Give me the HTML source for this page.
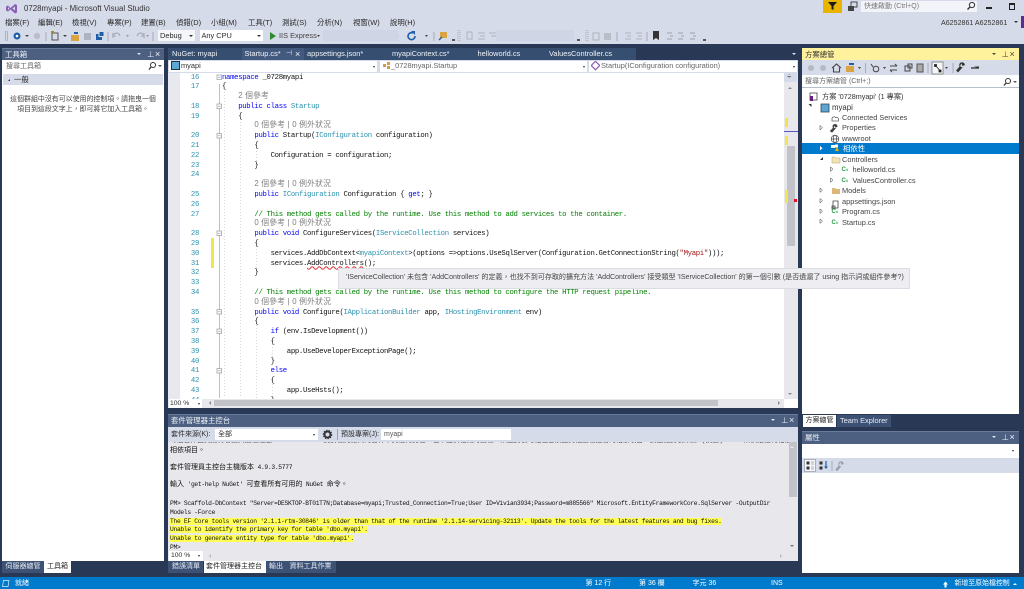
<!DOCTYPE html>
<html><head><meta charset="utf-8"><style>
html,body{margin:0;padding:0;width:1024px;height:589px;overflow:hidden;background:#293955}
body{position:relative;font-family:"Liberation Sans","Noto Sans CJK TC",sans-serif;font-size:7.4px;color:#2a2a2a}
#w{position:absolute;left:0;top:0;width:1024px;height:589px;overflow:hidden;filter:blur(.3px)}
.a{position:absolute}
.t{position:absolute;white-space:nowrap;line-height:10px}
pre{margin:0;position:absolute;font-family:"Liberation Mono","Noto Sans CJK TC",monospace}
.code{left:222px;top:73.5px;font-size:7.3px;letter-spacing:-.33px;line-height:9.79px;color:#111}
.nums{left:180px;width:19px;top:73.5px;font-size:7.3px;letter-spacing:-.33px;line-height:9.79px;color:#2b91af;text-align:right}
.k{color:#0000ff}.ty{color:#2b91af}.c{color:#008000}.h{color:#808080;font-family:"Liberation Sans","Noto Sans CJK TC",sans-serif;font-size:7.8px;letter-spacing:.2px;line-height:0}.s{color:#a31515}
.con{left:170px;font-size:6.3px;letter-spacing:-.31px;line-height:8.8px;color:#111;top:0}
.cj{font-size:7px;letter-spacing:0;line-height:0}
.y{background:#ffff54}
.w{color:#fff}.lt{color:#e8ecf4}
.tw{color:#f0f3f8}
.tb{font-size:7px}
</style></head><body><div id="w">
<div class="a" style="left:0;top:0;width:1024px;height:44px;background:#d6dbe9"></div>
<div class="a" style="left:0;top:44px;width:1024px;height:533px;background:#293955"></div>
<div class="a" style="left:0;top:577px;width:1024px;height:12px;background:#007acc"></div>

<!-- title -->
<svg class="a" style="left:5px;top:2px" width="13" height="13" viewBox="0 0 13 13"><path d="M1 4.5 3 3.5 5.5 6 10 2 12 3V10.5L10 11.5 5.5 7.5 3 9.5 1 8.5ZM3 5V8L4.4 6.5ZM10 4.5 7.5 6.5 10 8.5Z" fill="#8c5fb8"/></svg>
<div class="t" style="left:24px;top:4px;font-size:7.9px;color:#333">0728myapi - Microsoft Visual Studio</div>
<div class="a" style="left:823px;top:0;width:19px;height:13px;background:#e8b400"></div>
<svg class="a" style="left:827px;top:1px" width="11" height="10"><path d="M1 1H10L6.5 5V9L4.5 8V5Z" fill="#1a1a1a"/></svg>
<svg class="a" style="left:847px;top:1px" width="11" height="11"><rect x="4" y="1" width="6" height="5" fill="none" stroke="#444"/><rect x="1" y="5" width="6" height="5" fill="#444"/></svg>
<div class="a" style="left:861px;top:1px;width:116px;height:11px;background:#f2f4f9"></div>
<div class="t" style="left:864px;top:1.5px;color:#777;font-size:7px">快速啟動 (Ctrl+Q)</div>
<svg class="a" style="left:966px;top:1px" width="10" height="10"><circle cx="6" cy="4" r="2.6" fill="none" stroke="#333"/><path d="M4 6 1.5 8.5" stroke="#333" stroke-width="1.4"/></svg>
<div class="a" style="left:986px;top:7px;width:6px;height:2px;background:#222"></div>
<div class="a" style="left:1009px;top:3px;width:4px;height:4px;border:1px solid #222;border-top-width:2px"></div>
<div class="t" style="left:941px;top:17.5px;font-size:7.1px;color:#333">A6252861 A6252861</div>
<div class="a" style="left:1014px;top:21px;border:2px solid transparent;border-top:2px solid #333"></div>
<div class="a" style="left:1021px;top:16px;width:3px;height:12px;background:#5c2d91"></div>

<!-- menu -->
<div class="t" style="left:5px;top:17.5px">檔案(F)</div>
<div class="t" style="left:38px;top:17.5px">編輯(E)</div>
<div class="t" style="left:72px;top:17.5px">檢視(V)</div>
<div class="t" style="left:107px;top:17.5px">專案(P)</div>
<div class="t" style="left:141px;top:17.5px">建置(B)</div>
<div class="t" style="left:176px;top:17.5px">偵錯(D)</div>
<div class="t" style="left:211px;top:17.5px">小組(M)</div>
<div class="t" style="left:248px;top:17.5px">工具(T)</div>
<div class="t" style="left:282px;top:17.5px">測試(S)</div>
<div class="t" style="left:317px;top:17.5px">分析(N)</div>
<div class="t" style="left:353px;top:17.5px">視窗(W)</div>
<div class="t" style="left:390px;top:17.5px">說明(H)</div>

<!-- toolbar -->
<svg class="a" style="left:0;top:28px" width="1024" height="16" viewBox="0 0 1024 16">
<g fill="#888"><path d="M5 3h1v10H5zM7 3h1v10H7z" opacity=".5"/></g>
<circle cx="17" cy="8" r="3.5" fill="#1e5fa8"/><circle cx="17" cy="8" r="1.3" fill="#fff"/>
<path d="M25 7h4l-2 2z" fill="#444"/>
<circle cx="37" cy="8" r="3.2" fill="#b9bec9"/>
<path d="M46 4v9" stroke="#aab" />
<rect x="52" y="5" width="6" height="7" fill="none" stroke="#555"/><path d="M51 3h3v2h-3z" fill="#b8860b"/>
<path d="M63 7h4l-2 2z" fill="#444"/>
<path d="M71 7h8v6h-8z" fill="#d9a441"/><path d="M74 4h4v2h-4z" fill="#1e5fa8"/>
<rect x="84" y="5" width="7" height="7" fill="#aeb3c0"/>
<rect x="96" y="6" width="6" height="6" fill="#1e5fa8"/><rect x="99" y="3.500" width="5" height="5" fill="#1e5fa8" stroke="#d6dbe9"/>
<path d="M108 4v9" stroke="#aab"/>
<path d="M113 10c-1-4 3-6 6-4l1 2M113 5v3h3" fill="none" stroke="#a7acb9" stroke-width="1.2"/>
<path d="M126 7h3l-1.500 2z" fill="#999"/>
<path d="M144 10c1-4-3-6-6-4l-1 2M144 5v3h-3" fill="none" stroke="#a7acb9" stroke-width="1.2"/>
<path d="M146 7h3l-1.500 2z" fill="#999"/>
<path d="M153 4v9" stroke="#aab"/>
<path d="M270 4l0 8 6-4z" fill="#2e8b2e"/>
<path d="M317 7h3l-1.500 2z" fill="#444"/>
<path d="M396 7h3l-1.500 2z" fill="#aaa"/>
<path d="M413 5a3.500 3.500 0 1 0 2 3" fill="none" stroke="#1e5fa8" stroke-width="1.6"/><path d="M411 3h4v4z" fill="#1e5fa8"/>
<path d="M425 7h3l-1.500 2z" fill="#444"/>
<path d="M434 4v9" stroke="#aab"/>
<rect x="440" y="4" width="7" height="6" fill="#d9a441"/><path d="M439 12l3-3" stroke="#1e5fa8" stroke-width="1.3"/>
<path d="M452 11h3v2h-3z" fill="#555"/>
<path d="M458 2v12" stroke="#aab" stroke-dasharray="1 1" />
<path d="M460 2v12" stroke="#aab" stroke-dasharray="1 1" />
<rect x="467" y="4" width="5" height="7" fill="none" stroke="#aeb3c0"/>
<path d="M478 5h7M480 8h5M478 11h7M489 5h7M491 8h5" stroke="#aeb3c0" fill="none"/>
<path d="M577 11h3v2h-3z" fill="#555"/><path d="M586 2v12" stroke="#aab" stroke-dasharray="1 1"/><path d="M588 2v12" stroke="#aab" stroke-dasharray="1 1"/>
<rect x="593" y="5" width="6" height="7" fill="none" stroke="#aeb3c0"/><rect x="604" y="5" width="7" height="7" fill="#b9bec9"/>
<path d="M617 4v9" stroke="#aab"/>
<path d="M625 5h6M627 8h4M625 11h6M636 5h6M638 8h4M636 11h6" stroke="#aeb3c0"/>
<path d="M647 4v9" stroke="#aab"/>
<path d="M653 3h6v9l-3-2-3 2z" fill="#333"/>
<path d="M667 5h5M670 8h3M667 11h5M678 5h5M681 8h3M678 11h5M690 5h5M693 8h3M690 11h5" stroke="#9aa0ae"/>
<path d="M703 11h3v2h-3z" fill="#555"/>
</svg>
<div class="a" style="left:158px;top:30px;width:37px;height:11px;background:#f5f6fa"></div>
<div class="t" style="left:160px;top:30.500px;font-size:7.400px">Debug</div>
<div class="a" style="left:189px;top:35px;border:2px solid transparent;border-top:2px solid #333"></div>
<div class="a" style="left:200px;top:30px;width:63px;height:11px;background:#fff"></div>
<div class="t" style="left:201.500px;top:30.500px;font-size:7.400px">Any CPU</div>
<div class="a" style="left:257px;top:35px;border:2px solid transparent;border-top:2px solid #333"></div>
<div class="t" style="left:279px;top:30.500px;font-size:7.400px;color:#444">IIS Express</div>
<div class="a" style="left:323px;top:30px;width:75px;height:11px;background:#cfd5e4"></div>
<div class="a" style="left:496px;top:30px;width:78px;height:11px;background:#cfd5e4"></div>

<!-- toolbox -->
<div class="a" style="left:2px;top:48px;width:162px;height:513px;background:#fff"></div>
<div class="a" style="left:2px;top:48px;width:162px;height:12px;background:#4d6082;border-top:1px solid #6a7c9c;box-sizing:border-box"></div>
<div class="t tw" style="left:5px;top:49.500px">工具箱</div>
<div class="a" style="left:137px;top:53px;border:2px solid transparent;border-top:2.500px solid #dfe5ef"></div>
<div class="t tw" style="left:147px;top:49.500px;font-size:7.500px">⊥</div>
<div class="t tw" style="left:155px;top:49px;font-size:9px">×</div>
<div class="t" style="left:6px;top:62px;color:#666;font-size:7px">搜尋工具箱</div>
<svg class="a" style="left:147px;top:61px" width="16" height="10"><circle cx="6" cy="4" r="2.500" fill="none" stroke="#333"/><path d="M4 6 2 8.500" stroke="#333" stroke-width="1.300"/><path d="M11 4h4l-2 2z" fill="#555"/></svg>
<div class="a" style="left:3px;top:74px;width:160px;height:11px;background:#d6dbe9"></div>
<div class="a" style="left:8px;top:79px;border:1.500px solid transparent;border-right:1.500px solid #333;border-bottom:1.500px solid #333"></div>
<div class="t" style="left:14px;top:74.500px">一般</div>
<div class="t" style="left:0;top:95px;width:166px;text-align:center;font-size:6.950px;color:#444">這個群組中沒有可以使用的控制項。請拖曳一個</div>
<div class="t" style="left:0;top:105px;width:166px;text-align:center;font-size:6.950px;color:#444">項目到這段文字上，即可將它加入工具箱。</div>
<div class="a" style="left:2px;top:561px;width:43px;height:12px;background:#3c5174"></div>
<div class="t lt tb" style="left:5.500px;top:562px">伺服器總管</div>
<div class="a" style="left:44px;top:561px;width:27px;height:12px;background:#fff"></div>
<div class="t tb" style="left:47px;top:562px;color:#222">工具箱</div>

<!-- editor tabs -->
<div class="a" style="left:168px;top:48px;width:74px;height:12px;background:#364e6f"></div>
<div class="a" style="left:242px;top:47.500px;width:62px;height:12.500px;background:#435a7e"></div>
<div class="a" style="left:304px;top:48px;width:332px;height:12px;background:#364e6f"></div>
<div class="t tw" style="left:172px;top:49px;font-size:7.400px">NuGet: myapi</div>
<div class="t tw" style="left:244.500px;top:49px;font-size:7.400px">Startup.cs*</div>
<div class="t tw" style="left:286px;top:49px;font-size:7px">⊣</div>
<div class="t tw" style="left:295px;top:48.500px;font-size:9px">×</div>
<div class="t tw" style="left:307px;top:49px;font-size:7.400px">appsettings.json*</div>
<div class="t tw" style="left:392px;top:49px;font-size:7.400px">myapiContext.cs*</div>
<div class="t tw" style="left:477.500px;top:49px;font-size:7.400px">helloworld.cs</div>
<div class="t tw" style="left:549px;top:49px;font-size:7.400px">ValuesController.cs</div>
<div class="a" style="left:792px;top:53px;border:2px solid transparent;border-top:2.500px solid #dfe5ef"></div>

<!-- editor -->
<div class="a" style="left:168px;top:60px;width:630px;height:348px;background:#fff"></div>
<div class="a" style="left:168px;top:60px;width:630px;height:12.500px;background:#d6dbe9"></div>
<div class="a" style="left:169px;top:60.500px;width:208px;height:11px;background:#fff"></div>
<div class="a" style="left:380px;top:60.500px;width:207px;height:11px;background:#fff"></div>
<div class="a" style="left:589px;top:60.500px;width:208px;height:11px;background:#fff"></div>
<svg class="a" style="left:171px;top:61px" width="9" height="10"><rect x=".5" y=".5" width="8" height="8" fill="#5aa7d6" stroke="#234"/></svg>
<div class="t" style="left:181px;top:61px;font-size:7.400px;color:#333">myapi</div>
<div class="a" style="left:373px;top:66px;border:1.500px solid transparent;border-top:2px solid #333"></div>
<svg class="a" style="left:382px;top:61px" width="9" height="10"><path d="M1 3h3v3h-3zM5 1h3v3h-3zM5 5h3v3h-3z" fill="#d39b4c"/></svg>
<div class="t" style="left:391px;top:61px;font-size:7.400px;color:#666">_0728myapi.Startup</div>
<div class="a" style="left:583px;top:66px;border:1.500px solid transparent;border-top:2px solid #333"></div>
<svg class="a" style="left:591px;top:61px" width="9" height="10"><rect x="1.500" y="1.500" width="6" height="6" fill="none" stroke="#8a5fb8" stroke-width="1.200" transform="rotate(45 4.500 4.500)"/></svg>
<div class="t" style="left:601px;top:61px;font-size:7.400px;color:#666">Startup(IConfiguration configuration)</div>
<div class="a" style="left:793px;top:66px;border:1.500px solid transparent;border-top:2px solid #333"></div>

<div class="a" style="left:168px;top:72.500px;width:12px;height:326px;background:#e8e9ee"></div>
<div class="a" style="left:168px;top:72.500px;width:630px;height:326px;overflow:hidden">
<pre class="nums" style="left:12px;top:1px">16
17

18
19

20
21
22
23
24

25
26
27

28
29
30
31
32
33
34

35
36
37
38
39
40
41
42
43
44</pre>
</div>
<div class="a" style="left:211px;top:238px;width:2.500px;height:30px;background:#f0e64c"></div>
<div class="a" style="left:218.500px;top:84px;width:.6px;height:314px;background:#c0c0c0"></div>
<svg class="a" style="left:214.500px;top:73px" width="10" height="326" fill="#fff" stroke="#999" stroke-width=".7">
<rect x="2" y="2" width="4.500" height="4.500"/><path d="M3 4.250h2.500"/>
<rect x="2" y="31" width="4.500" height="4.500"/><path d="M3 33.250h2.500"/>
<rect x="2" y="60.500" width="4.500" height="4.500"/><path d="M3 62.750h2.500"/>
<rect x="2" y="158" width="4.500" height="4.500"/><path d="M3 160.250h2.500"/>
<rect x="2" y="236.500" width="4.500" height="4.500"/><path d="M3 238.750h2.500"/>
<rect x="2" y="256" width="4.500" height="4.500"/><path d="M3 258.250h2.500"/>
<rect x="2" y="295.500" width="4.500" height="4.500"/><path d="M3 297.750h2.500"/>
</svg>
<svg class="a" style="left:221px;top:72px" width="60" height="326" stroke="#bcbcbc" stroke-width=".6" stroke-dasharray="1 2" fill="none">
<path d="M3.500 20V326M19.500 50V326M35.500 73V93M35.500 171V201M35.500 250V326M51.500 269V289M51.500 309V326"/>
</svg>
<div class="a" style="left:168px;top:72.500px;width:616px;height:326px;overflow:hidden">
<pre class="code" style="left:54px;top:1px"><span class="k">namespace</span> _0728myapi
{
    <span class="h">2 個參考</span>
    <span class="k">public class</span> <span class="ty">Startup</span>
    {
        <span class="h">0 個參考 | 0 例外狀況</span>
        <span class="k">public</span> Startup(<span class="ty">IConfiguration</span> configuration)
        {
            Configuration = configuration;
        }

        <span class="h">2 個參考 | 0 例外狀況</span>
        <span class="k">public</span> <span class="ty">IConfiguration</span> Configuration { <span class="k">get</span>; }

        <span class="c">// This method gets called by the runtime. Use this method to add services to the container.</span>
        <span class="h">0 個參考 | 0 例外狀況</span>
        <span class="k">public void</span> ConfigureServices(<span class="ty">IServiceCollection</span> services)
        {
            services.AddDbContext&lt;<span class="ty">myapiContext</span>&gt;(options =&gt;options.UseSqlServer(Configuration.GetConnectionString(<span class="s">"Myapi"</span>)));
            services.<span style="text-decoration:underline wavy #e03030 .6px">AddControllers</span>();
        }

        <span class="c">// This method gets called by the runtime. Use this method to configure the HTTP request pipeline.</span>
        <span class="h">0 個參考 | 0 例外狀況</span>
        <span class="k">public void</span> Configure(<span class="ty">IApplicationBuilder</span> app, <span class="ty">IHostingEnvironment</span> env)
        {
            <span class="k">if</span> (env.IsDevelopment())
            {
                app.UseDeveloperExceptionPage();
            }
            <span class="k">else</span>
            {
                app.UseHsts();
            }</pre>
</div>
<!-- scrollbar -->
<div class="a" style="left:784px;top:72.500px;width:14px;height:326px;background:#e8e8ec"></div>
<div class="a" style="left:784px;top:73px;width:13px;height:9px;background:#d6dbe9"></div>
<div class="t" style="left:787px;top:72px;font-size:8px;color:#444">÷</div>
<div class="a" style="left:788px;top:85px;border:2.500px solid transparent;border-bottom:2.500px solid #888"></div>
<div class="a" style="left:787px;top:146px;width:8px;height:100px;background:#c2c3c9"></div>
<div class="a" style="left:785px;top:118px;width:2.500px;height:9px;background:#f0e64c"></div>
<div class="a" style="left:785px;top:136px;width:2.500px;height:9px;background:#f0e64c"></div>
<div class="a" style="left:785px;top:190px;width:2.500px;height:13px;background:#f0e64c"></div>
<div class="a" style="left:784px;top:131px;width:14px;height:1px;background:#5555c8"></div>
<div class="a" style="left:794px;top:199px;width:3px;height:3px;background:#e81123"></div>
<div class="a" style="left:788px;top:393px;border:2.500px solid transparent;border-top:2.500px solid #888"></div>
<!-- editor bottom -->
<div class="a" style="left:168px;top:398.500px;width:616px;height:9.500px;background:#e8e8ec"></div>
<div class="a" style="left:169px;top:399px;width:33px;height:9px;background:#fff"></div>
<div class="t" style="left:170px;top:398.500px;font-size:6.800px">100 %</div>
<div class="a" style="left:198px;top:403px;border:1.500px solid transparent;border-top:2px solid #333"></div>
<div class="a" style="left:207px;top:401px;border:2px solid transparent;border-right:2.500px solid #888"></div>
<div class="a" style="left:214px;top:400px;width:504px;height:6px;background:#c2c3c9"></div>
<div class="a" style="left:778px;top:401px;border:2px solid transparent;border-left:2.500px solid #888"></div>

<!-- console -->
<div class="a" style="left:168px;top:415px;width:630px;height:146px;background:#e8e8ec"></div>
<div class="a" style="left:168px;top:414px;width:630px;height:13px;background:#4d6082;border-top:1px solid #6a7c9c;box-sizing:border-box"></div>
<div class="t tw" style="left:171px;top:415.500px">套件管理器主控台</div>
<div class="a" style="left:771px;top:419px;border:2px solid transparent;border-top:2.500px solid #dfe5ef"></div>
<div class="t tw" style="left:781px;top:415.500px;font-size:7.500px">⊥</div>
<div class="t tw" style="left:789px;top:415px;font-size:9px">×</div>
<div class="a" style="left:168px;top:427px;width:630px;height:14.500px;background:#d6dbe9"></div>
<div class="t" style="left:171px;top:429.500px;font-size:7px">套件來源(K):</div>
<div class="a" style="left:215px;top:429px;width:103px;height:11px;background:#fff"></div>
<div class="t" style="left:218px;top:429.500px;font-size:7px">全部</div>
<div class="a" style="left:313px;top:434px;border:1.500px solid transparent;border-top:2px solid #333"></div>
<svg class="a" style="left:322px;top:429px" width="11" height="11"><circle cx="5.500" cy="5.500" r="3" fill="none" stroke="#333" stroke-width="2"/><circle cx="5.500" cy="5.500" r="4.200" fill="none" stroke="#333" stroke-width="1.200" stroke-dasharray="1.300 1.300"/></svg>
<div class="a" style="left:337px;top:429px;width:.7px;height:11px;background:#9aa4b8"></div>
<div class="t" style="left:341px;top:429.500px;font-size:7px">預設專案(J):</div>
<div class="a" style="left:381px;top:429px;width:130px;height:11px;background:#fff"></div>
<div class="t" style="left:384px;top:429.500px;font-size:7px;color:#555">myapi</div>
<pre class="con" style="top:441.500px;height:4px;overflow:hidden;color:#444;font-size:6.800px;line-height:5px;letter-spacing:0"><span style="position:relative;top:-3px">每個套件由其擁有者授與授權給您。 Microsoft 對於協力廠商的套件不負任何責任，也不提供相關的授權。某些封裝可能包含須由其他授權控管的相依項目。請遵循封裝來源 (摘要) URL 來決定任何相依</span></pre>
<pre class="con" style="top:447px"><span class="cj">相依項目。</span></pre>
<pre class="con" style="top:464px"><span class="cj">套件管理員主控台主機版本</span> 4.9.3.5777</pre>
<pre class="con" style="top:481px"><span class="cj">輸入</span> 'get-help NuGet' <span class="cj">可查看所有可用的</span> NuGet <span class="cj">命令。</span></pre>
<pre class="con" style="top:500px">PM&gt; Scaffold-DbContext "Server=DESKTOP-BT01T7N;Database=myapi;Trusted_Connection=True;User ID=Vivian3934;Password=m885566" Microsoft.EntityFrameworkCore.SqlServer -OutputDir
Models -Force
<span class="y">The EF Core tools version '2.1.1-rtm-30846' is older than that of the runtime '2.1.14-servicing-32113'. Update the tools for the latest features and bug fixes.</span>
<span class="y">Unable to identify the primary key for table 'dbo.myapi'.</span>
<span class="y">Unable to generate entity type for table 'dbo.myapi'.</span>
PM&gt;</pre>
<div class="a" style="left:789px;top:442px;width:8px;height:55px;background:#c2c3c9"></div>
<div class="a" style="left:790px;top:444px;border:2.500px solid transparent;border-bottom:2.500px solid #e8e8ec"></div>
<div class="a" style="left:790px;top:545px;border:2.500px solid transparent;border-top:2.500px solid #777"></div>
<div class="a" style="left:169px;top:551px;width:34px;height:10px;background:#fff"></div>
<div class="t" style="left:171px;top:551px;font-size:6.800px">100 %</div>
<div class="a" style="left:198px;top:555px;border:1.500px solid transparent;border-top:2px solid #333"></div>
<div class="a" style="left:207px;top:554px;border:2px solid transparent;border-right:2.500px solid #bbb"></div>
<div class="a" style="left:780px;top:554px;border:2px solid transparent;border-left:2.500px solid #bbb"></div>
<div class="a" style="left:168px;top:561px;width:35px;height:12px;background:#3c5174"></div>
<div class="t lt tb" style="left:172px;top:562px">錯誤清單</div>
<div class="a" style="left:203.500px;top:561px;width:62px;height:12px;background:#fff"></div>
<div class="t tb" style="left:206px;top:562px;color:#222">套件管理器主控台</div>
<div class="a" style="left:265.500px;top:561px;width:21px;height:12px;background:#3c5174"></div>
<div class="t lt tb" style="left:269px;top:562px">輸出</div>
<div class="a" style="left:286.500px;top:561px;width:49px;height:12px;background:#3c5174"></div>
<div class="t lt tb" style="left:289.500px;top:562px">資料工具作業</div>

<!-- solution explorer -->
<div class="a" style="left:802px;top:48px;width:217px;height:366px;background:#fff"></div>
<div class="a" style="left:802px;top:48px;width:217px;height:12px;background:#fff29d"></div>
<div class="t" style="left:805px;top:49.500px;color:#333">方案總管</div>
<div class="a" style="left:992px;top:53px;border:2px solid transparent;border-top:2.500px solid #444"></div>
<div class="t" style="left:1001.500px;top:49.500px;font-size:7.500px;color:#444">⊥</div>
<div class="t" style="left:1009.500px;top:49px;font-size:9px;color:#444">×</div>
<div class="a" style="left:802px;top:60px;width:217px;height:15px;background:#d6dbe9"></div>
<svg class="a" style="left:802px;top:60px" width="217" height="15" viewBox="802 60 217 15">
<circle cx="811" cy="68" r="3" fill="#b4b9c6"/><circle cx="823" cy="68" r="3" fill="#b4b9c6"/>
<path d="M832 68l4.500-4 4.500 4M833.500 67.500V72h6v-4.500" fill="none" stroke="#444" stroke-width="1.100"/>
<rect x="846" y="66" width="8" height="6" fill="#d9a441"/><path d="M849 63h5v2h-5z" fill="#1e5fa8"/>
<path d="M858 67h3l-1.500 2z" fill="#444"/><path d="M865.500 63v10" stroke="#aab"/>
<circle cx="876" cy="69" r="2.800" fill="none" stroke="#444"/><path d="M871 64l2 3" stroke="#444"/>
<path d="M883 67h3l-1.500 2z" fill="#444"/>
<path d="M890 66h7M897 66l-2-2M890 70h7M890 70l2 2" fill="none" stroke="#444"/>
<rect x="905" y="66" width="5" height="5" fill="none" stroke="#444"/><rect x="908" y="64" width="4" height="4" fill="none" stroke="#444"/>
<rect x="917" y="64" width="6" height="8" fill="#aaa" stroke="#555"/>
<path d="M928 63v10" stroke="#aab"/>
<rect x="932" y="62" width="11" height="12" fill="#f5f6fa" stroke="#555" stroke-width=".6"/><path d="M934.500 64.500h2v2h-2zM939 70h2v2h-2zM936 66l3.500 4" fill="#222" stroke="#222" stroke-width=".8"/>
<path d="M945 67h3l-1.500 2z" fill="#444"/>
<path d="M953 63v10" stroke="#aab"/>
<path d="M958 72l4-4.500a2.500 2.500 0 1 1 2.500-2.500l-2 .5-.5-1.500 1-1a3 3 0 0 0-3 3.500l-3.500 4z" fill="#333" stroke="#333" stroke-width=".6"/>
<path d="M971 68h8" stroke="#333" stroke-width="1.300"/><path d="M974 66.500h5v2" fill="#333"/>
</svg>
<div class="a" style="left:802px;top:75px;width:217px;height:13px;background:#fff;border-bottom:.5px solid #b6bdcc;box-sizing:border-box"></div>
<div class="t" style="left:805px;top:77px;font-size:7px;color:#666">搜尋方案總管 (Ctrl+;)</div>
<svg class="a" style="left:1002px;top:77px" width="16" height="10"><circle cx="6" cy="4" r="2.500" fill="none" stroke="#333"/><path d="M4 6 2 8.500" stroke="#333" stroke-width="1.300"/><path d="M11 4h4l-2 2z" fill="#555"/></svg>
<div class="a" style="left:802px;top:143px;width:217px;height:11px;background:#007acc"></div>
<svg class="a" style="left:802px;top:90px" width="217" height="145" viewBox="802 90 217 145">
<rect x="810" y="93" width="7" height="7" fill="none" stroke="#444" stroke-width=".8"/><path d="M810 96h3v5h-3z" fill="#68217a"/>
<path d="M813 106v-3h-3z" fill="#333" transform="translate(-1.500 1)"/>
<rect x="821" y="104" width="8" height="8" fill="#5aa7d6" stroke="#345" stroke-width=".8"/>
<path d="M832 119a2 2 0 0 1 3.500-1.500 2 2 0 0 1 3 1.500v2h-6.500z" fill="none" stroke="#666" stroke-width=".8"/>
<path d="M832 132l3-3.500a2 2 0 1 1 2 -2l-1.500.5-.5-1 1-1a2.300 2.300 0 0 0-2.500 3l-3 3z" fill="#444" stroke="#444"/>
<circle cx="835" cy="139" r="3.800" fill="none" stroke="#444" stroke-width=".7"/><ellipse cx="835" cy="139" rx="1.700" ry="3.800" fill="none" stroke="#444" stroke-width=".7"/><path d="M831 139h8" stroke="#444" stroke-width=".7"/>
<rect x="831" y="145" width="4" height="3" fill="#fff"/><rect x="835" y="144.500" width="3" height="3" fill="#fff"/><path d="M837 147l2 4h-4z" fill="#f2b100"/>
<path d="M832 157h3l1 1h4v5h-8z" fill="#f3e3b7" stroke="#b9a06b" stroke-width=".5"/>
<path d="M832 188h3l1 1h4v5h-8z" fill="#dcb67a"/>
<path d="M833 207v-6h5v7h-5zM832 206h3v3h-3z" fill="none" stroke="#444" stroke-width=".8"/>
<g fill="#333"><path d="M820 125.500l2.500 2.200-2.500 2.200z" fill="#fff" stroke="#333" stroke-width=".5"/>
<path d="M820 188l2.500 2.200-2.500 2.200z" fill="#fff" stroke="#333" stroke-width=".5"/>
<path d="M820 198.500l2.500 2.200-2.500 2.200z" fill="#fff" stroke="#333" stroke-width=".5"/>
<path d="M820 209l2.500 2.200-2.500 2.200z" fill="#fff" stroke="#333" stroke-width=".5"/>
<path d="M820 219l2.500 2.200-2.500 2.200z" fill="#fff" stroke="#333" stroke-width=".5"/>
<path d="M830.500 167l2.500 2.200-2.500 2.200z" fill="#fff" stroke="#333" stroke-width=".5"/>
<path d="M830.500 178l2.500 2.200-2.500 2.200z" fill="#fff" stroke="#333" stroke-width=".5"/>
<path d="M823 157v3h-3z"/></g>
<path d="M820 146l2.500 2.200-2.500 2.200z" fill="#fff"/>
</svg>
<div class="t" style="left:822px;top:91.500px;font-size:7.200px;color:#333">方案 '0728myapi' (1 專案)</div>
<div class="t" style="left:832px;top:102.500px;font-size:7.800px;color:#333">myapi</div>
<div class="t" style="left:842px;top:112.800px;font-size:7.300px;color:#444">Connected Services</div>
<div class="t" style="left:842px;top:123.300px;font-size:7.400px;color:#444">Properties</div>
<div class="t" style="left:842px;top:133.800px;font-size:7.400px;color:#444">wwwroot</div>
<div class="t" style="left:843px;top:144px;font-size:7.400px;color:#fff">相依性</div>
<div class="t" style="left:842px;top:154.500px;font-size:7.400px;color:#444">Controllers</div>
<div class="t" style="left:852.500px;top:165px;font-size:7.400px;color:#444">helloworld.cs</div>
<div class="t" style="left:852.500px;top:175.500px;font-size:7.400px;color:#444">ValuesController.cs</div>
<div class="t" style="left:842px;top:186px;font-size:7.400px;color:#444">Models</div>
<div class="t" style="left:842px;top:196.500px;font-size:7.400px;color:#444">appsettings.json</div>
<div class="t" style="left:842px;top:207px;font-size:7.400px;color:#444">Program.cs</div>
<div class="t" style="left:842px;top:217.500px;font-size:7.400px;color:#444">Startup.cs</div>
<div class="t" style="left:841.500px;top:165px;font-size:6px;font-weight:bold;color:#2a9d4a">C<span style="font-size:4px">#</span></div>
<div class="t" style="left:841.500px;top:175.500px;font-size:6px;font-weight:bold;color:#2a9d4a">C<span style="font-size:4px">#</span></div>
<div class="t" style="left:831.500px;top:207px;font-size:6px;font-weight:bold;color:#2a9d4a">C<span style="font-size:4px">#</span></div>
<div class="t" style="left:831.500px;top:217.500px;font-size:6px;font-weight:bold;color:#2a9d4a">C<span style="font-size:4px">#</span></div>

<div class="a" style="left:803px;top:415px;width:33px;height:12px;background:#fff"></div>
<div class="t tb" style="left:805.500px;top:416px;color:#222">方案總管</div>
<div class="a" style="left:836.500px;top:415px;width:54px;height:12px;background:#3c5174"></div>
<div class="t lt" style="left:840px;top:416px;font-size:7.400px">Team Explorer</div>

<!-- properties -->
<div class="a" style="left:802px;top:431px;width:217px;height:142px;background:#fff"></div>
<div class="a" style="left:802px;top:431px;width:217px;height:13px;background:#4d6082;border-top:1px solid #6a7c9c;box-sizing:border-box"></div>
<div class="t tw" style="left:805px;top:433px">屬性</div>
<div class="a" style="left:992px;top:436px;border:2px solid transparent;border-top:2.500px solid #dfe5ef"></div>
<div class="t tw" style="left:1001.500px;top:432.500px;font-size:7.500px">⊥</div>
<div class="t tw" style="left:1009.500px;top:432px;font-size:9px">×</div>
<div class="a" style="left:1012px;top:450px;border:1.500px solid transparent;border-top:2px solid #333"></div>
<div class="a" style="left:802px;top:458px;width:217px;height:15px;background:#d6dbe9"></div>
<svg class="a" style="left:802px;top:458px" width="60" height="15" viewBox="802 458 60 15">
<rect x="804.500" y="459.500" width="11" height="12" fill="#f5f6fa" stroke="#889" stroke-width=".6"/>
<path d="M806.500 461.500h3v3h-3zM806.500 466.500h3v3h-3z" fill="#333"/><path d="M811 462h3M811 464h3M811 467h3M811 469h3" stroke="#999" stroke-width=".7"/>
<path d="M819.500 461.500h3v3h-3zM819.500 466.500h3v3h-3z" fill="#333"/><path d="M826 461v7" stroke="#1e5fa8" stroke-width="1.200"/><path d="M824 466.500h4l-2 2.500z" fill="#1e5fa8"/>
<path d="M832 461v10" stroke="#aab"/>
<path d="M837 471l4-4.500a2.500 2.500 0 1 1 2.500-2.500l-2 .5-.5-1.500 1-1a3 3 0 0 0-3 3.500l-3.500 4z" fill="#9aa0ae" stroke="#9aa0ae" stroke-width=".5"/>
</svg>

<!-- tooltip -->
<div class="a" style="left:338px;top:268px;width:572px;height:21px;background:#eeeef2;border:.7px solid #dcdce4;box-sizing:border-box"></div>
<div class="t" style="left:346px;top:272.500px;font-size:7.050px;color:#444">'IServiceCollection' 未包含 'AddControllers' 的定義，也找不到可存取的擴充方法 'AddControllers' 接受類型 'IServiceCollection' 的第一個引數 (是否遺漏了 using 指示詞或組件參考?)</div>

<!-- status -->
<svg class="a" style="left:1px;top:579px" width="9" height="9"><path d="M2.500 1.500h5.500l-1 6h-5.500z" fill="none" stroke="#e6f2fa" stroke-width=".7"/></svg>
<div class="t w" style="left:15px;top:578.500px;font-size:7px">就緒</div>
<div class="t w" style="left:585.500px;top:578.500px;font-size:7px">第 12 行</div>
<div class="t w" style="left:639px;top:578.500px;font-size:7px">第 36 欄</div>
<div class="t w" style="left:692.500px;top:578.500px;font-size:7px">字元 36</div>
<div class="t w" style="left:771px;top:578.500px;font-size:7px">INS</div>
<svg class="a" style="left:942px;top:581px" width="7" height="7"><path d="M3.500 .5 6 3.500H4.500V6.500h-2V3.500H1z" fill="#fff"/></svg>
<div class="t w" style="left:954.500px;top:578.500px;font-size:6.900px">新增至原始檔控制</div>
<div class="a" style="left:1013px;top:581px;border:2px solid transparent;border-bottom:2.500px solid #fff"></div>
</div></body></html>
